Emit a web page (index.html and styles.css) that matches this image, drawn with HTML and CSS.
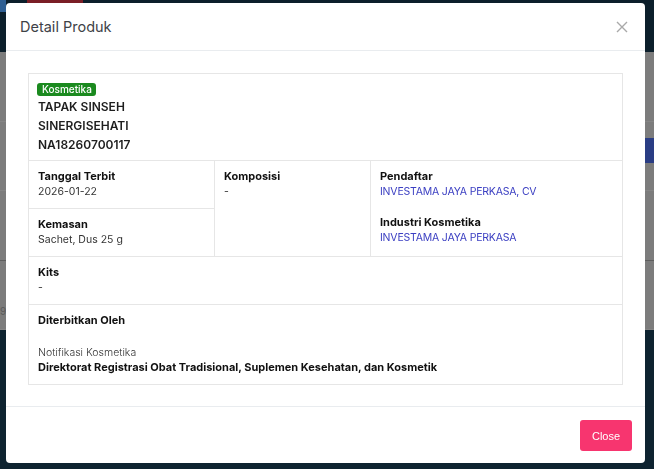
FILE: index.html
```html
<!DOCTYPE html>
<html lang="en">
<head>
    <meta charset="UTF-8">
    <meta name="viewport" content="width=device-width, initial-scale=1.0">
    <title>Detail Produk</title>
    <link rel="stylesheet" href="styles.css">
</head>
<body>

<div class="page">
    <header class="topbar">
        <span class="logo"></span>
        <span class="nav-pill"></span>
    </header>
    <main class="content">
        <div class="content-row"></div>
        <div class="content-row">
            <span class="search-btn"></span>
        </div>
        <div class="content-row dark"></div>
        <div class="content-row"><span class="cut-text">9</span></div>
    </main>
    <footer class="footer"></footer>
</div>

<div class="backdrop"></div>

<div class="modal">
    <div class="modal-header">
        <h5 class="modal-title">Detail Produk</h5>
        <button class="btn-x" onclick="closeModal()">
            <svg width="12" height="12" viewBox="0 0 12 12">
                <path d="M1 1 L11 11 M11 1 L1 11" stroke="#a9a9a9" stroke-width="1.4" fill="none"/>
            </svg>
        </button>
    </div>

    <div class="modal-body">
        <div class="detail">
            <div class="head-cell">
                <span class="badge">Kosmetika</span>
                <div class="name">TAPAK SINSEH</div>
                <div class="name">SINERGISEHATI</div>
                <div class="name">NA18260700117</div>
            </div>

            <div class="grid">
                <div class="col-stack">
                    <div class="cell">
                        <div class="label">Tanggal Terbit</div>
                        <div class="value">2026-01-22</div>
                    </div>
                    <div class="cell">
                        <div class="label">Kemasan</div>
                        <div class="value">Sachet, Dus 25 g</div>
                    </div>
                </div>
                <div class="cell mid">
                    <div class="label">Komposisi</div>
                    <div class="value">-</div>
                </div>
                <div class="cell">
                    <div class="label">Pendaftar</div>
                    <div class="value link">INVESTAMA JAYA PERKASA, CV</div>
                    <div class="label spaced">Industri Kosmetika</div>
                    <div class="value link">INVESTAMA JAYA PERKASA</div>
                </div>
            </div>

            <div class="cell row">
                <div class="label">Kits</div>
                <div class="value">-</div>
            </div>

            <div class="cell row last">
                <div class="label">Diterbitkan Oleh</div>
                <div class="value light spaced-lg">Notifikasi Kosmetika</div>
                <div class="label">Direktorat Registrasi Obat Tradisional, Suplemen Kesehatan, dan Kosmetik</div>
            </div>
        </div>
    </div>

    <div class="modal-footer">
        <button class="btn-close" onclick="closeModal()">Close</button>
    </div>
</div>

<script>
    function closeModal() {
        document.querySelector('.modal').style.display = 'none';
        document.querySelector('.backdrop').style.display = 'none';
    }
</script>

</body>
</html>
```

FILE: styles.css
```css
body {
    margin: 0;
    font-family: Inter, "Open Sans", sans-serif;
    overflow: hidden;
}

/* page behind the dialog, already dimmed */
.page {
    display: flex;
    flex-direction: column;
    height: 100vh;
}

.topbar {
    height: 52px;
    background-color: #0c1f2b;
    display: flex;
    align-items: flex-start;
    gap: 21px;
}

.logo {
    width: 6px;
    height: 12px;
    background-color: #2f5f93;
}

.nav-pill {
    width: 56px;
    height: 4px;
    background-color: #7a1e26;
}

.content {
    height: 278px;
    background-color: #7c7c7c;
    display: flex;
    flex-direction: column;
}

.content-row {
    flex: 1;
    border-bottom: 1px solid #858585;
    display: flex;
    justify-content: flex-end;
    align-items: flex-start;
}

.content-row.dark {
    border-bottom-color: #5e5e5e;
}

.search-btn {
    width: 14px;
    height: 25px;
    margin-top: 16px;
    background-color: #2a3d84;
}

.cut-text {
    align-self: flex-end;
    margin-right: auto;
    margin-bottom: 12px;
    font-size: 10px;
    line-height: 12px;
    color: #5a5a5a;
}

.footer {
    flex: 1;
    background-color: #0e2330;
}

.backdrop {
    position: fixed;
    inset: 0;
    background-color: transparent;
}

/* dialog */
.modal {
    position: fixed;
    top: 3px;
    left: 6px;
    width: 639px;
    background-color: #fff;
    border-radius: 4px;
    display: flex;
    flex-direction: column;
}

.modal-header {
    height: 47px;
    padding: 0 14px;
    display: flex;
    justify-content: space-between;
    align-items: center;
    border-bottom: 1px solid #e9ecef;
}

.modal-title {
    margin: 0;
    font-size: 14.5px;
    font-weight: 400;
    color: #3e4247;
}

.btn-x {
    background: none;
    border: none;
    padding: 0;
    margin-right: 3px;
    display: flex;
    cursor: pointer;
}

.modal-body {
    padding: 22px 22px 21px;
}

.detail {
    border: 1px solid #e6e6e6;
    color: #222;
}

.head-cell {
    padding: 9px 9px 6px 8px;
    border-bottom: 1px solid #e6e6e6;
}

.badge {
    display: block;
    width: fit-content;
    background-color: #1b8a1f;
    color: #fff;
    font-size: 10px;
    font-weight: 500;
    line-height: 13px;
    padding: 0 4px 0 5px;
    border-radius: 3px;
    margin-bottom: 1px;
}

.name {
    padding-left: 1px;
    font-size: 12px;
    font-weight: 600;
    line-height: 19px;
    color: #1e1e1e;
}

.grid {
    display: grid;
    grid-template-columns: 186px 156px 1fr;
    border-bottom: 1px solid #e6e6e6;
}

.col-stack {
    display: flex;
    flex-direction: column;
    border-right: 1px solid #e6e6e6;
}

.col-stack .cell + .cell {
    border-top: 1px solid #e6e6e6;
}

.cell {
    padding: 8px 9px 9px;
}

.cell.mid {
    border-right: 1px solid #e6e6e6;
}

.cell.row {
    border-bottom: 1px solid #e6e6e6;
}

.cell.row.last {
    border-bottom: none;
}

.label {
    font-size: 11px;
    font-weight: 700;
    line-height: 15px;
    color: #111;
}

.value {
    font-size: 10.5px;
    line-height: 15px;
    color: #333;
}

.value.link {
    color: #3b3fc2;
    letter-spacing: -0.2px;
}

.value.light {
    font-weight: 300;
}

.spaced {
    margin-top: 16px;
}

.spaced-lg {
    margin-top: 17px;
}

.modal-footer {
    border-top: 1px solid #e9ecef;
    padding: 13px 13px 12px;
    display: flex;
    justify-content: flex-end;
}

.btn-close {
    background-color: #f7356f;
    color: #fff;
    border: none;
    border-radius: 3px;
    width: 52px;
    height: 31px;
    font-family: "Liberation Sans", Arial, sans-serif;
    font-size: 11px;
    cursor: pointer;
}
```
